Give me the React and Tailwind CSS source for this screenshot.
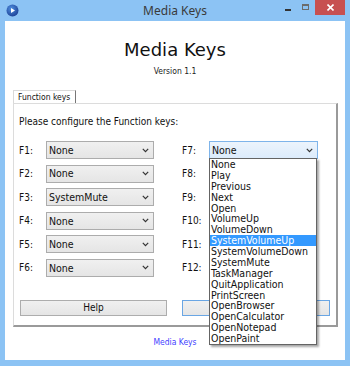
import React from "react";

const Chevron = () => (
  <svg width="7" height="5" viewBox="0 0 7 5" className="shrink-0">
    <path d="M0.8 0.8 L3.5 3.6 L6.2 0.8" fill="none" stroke="#333" strokeWidth="1.2" />
  </svg>
);

function Combo({ value, focused, children }) {
  return (
    <div className="relative w-full h-full">
      <div
        className={
          "w-full h-full flex items-center justify-between pl-[2px] pr-[4px] border text-[10.5px] leading-none text-[#111] " +
          (focused
            ? "border-[#7eb4ea] bg-gradient-to-b from-[#ecf4fc] to-[#dcecfc]"
            : "border-[#acacac] bg-gradient-to-b from-[#f0f0f0] to-[#e5e5e5]")
        }
      >
        <span>{value}</span>
        <Chevron />
      </div>
      {children}
    </div>
  );
}

const items = [
  "None",
  "Play",
  "Previous",
  "Next",
  "Open",
  "VolumeUp",
  "VolumeDown",
  "SystemVolumeUp",
  "SystemVolumeDown",
  "SystemMute",
  "TaskManager",
  "QuitApplication",
  "PrintScreen",
  "OpenBrowser",
  "OpenCalculator",
  "OpenNotepad",
  "OpenPaint",
];

function DropList() {
  return (
    <div className="absolute left-0 top-[17px] w-[108px] bg-white border border-[#646464] shadow-[2px_2px_2px_rgba(0,0,0,0.35)] z-10">
      {items.map((it) => (
        <div
          key={it}
          className={
            "h-[10.875px] leading-[10.875px] text-[10.5px] pl-[1px] whitespace-nowrap " +
            (it === "SystemVolumeUp" ? "bg-[#3399ff] text-white" : "text-[#111]")
          }
        >
          {it}
        </div>
      ))}
    </div>
  );
}

const left = [
  ["F1:", "None"],
  ["F2:", "None"],
  ["F3:", "SystemMute"],
  ["F4:", "None"],
  ["F5:", "None"],
  ["F6:", "None"],
];
const right = ["F7:", "F8:", "F9:", "F10:", "F11:", "F12:"];

export default function App() {
  return (
    <div
      className="w-[350px] h-[366px] bg-[#8cc3f4] flex flex-col overflow-hidden"
      style={{ fontFamily: '"DejaVu Sans Condensed", "DejaVu Sans", sans-serif' }}
    >
      {/* Title bar */}
      <div className="h-[21px] relative flex items-center justify-center shrink-0">
        <svg width="13" height="13" viewBox="0 0 13 13" className="absolute left-[6px] top-[4px]">
          <defs>
            <radialGradient id="g" cx="40%" cy="35%" r="70%">
              <stop offset="0%" stopColor="#4f8fe0" />
              <stop offset="100%" stopColor="#1b3f94" />
            </radialGradient>
          </defs>
          <circle cx="6.5" cy="6.5" r="6" fill="url(#g)" />
          <path d="M5 4 L9 6.5 L5 9 Z" fill="#fff" />
        </svg>
        <span
          className="text-[12px] text-[#3a3a3a] mt-[1px]"
          style={{ fontFamily: '"Noto Sans", "Open Sans", sans-serif' }}
        >
          Media Keys
        </span>
        <div className="absolute left-[285px] top-[9px] w-[6px] h-[2px] bg-[#333]" />
        <div className="absolute left-[302px] top-[4px] w-[7px] h-[6px] border border-t-2 border-[#6b6b6b]" />
        <div className="absolute left-[315px] top-0 w-[30px] h-[15px] bg-[#c75050] flex items-center justify-center">
          <svg width="7" height="7" viewBox="0 0 7 7">
            <path d="M0.5 0.5 L6.5 6.5 M6.5 0.5 L0.5 6.5" stroke="#fff" strokeWidth="1.6" />
          </svg>
        </div>
      </div>

      {/* Client */}
      <div className="flex-1 mx-[5px] mb-[6px] bg-white flex flex-col items-start">
        <div
          className="self-stretch text-center text-[18px] leading-[22px] text-[#111] mt-[18px]"
          style={{ fontFamily: '"DejaVu Sans", sans-serif' }}
        >
          Media Keys
        </div>
        <div className="self-stretch text-center text-[8.5px] leading-[12px] text-[#222] mt-[4px]">
          Version 1.1
        </div>

        {/* Tab header */}
        <div className="ml-[8px] mt-[13px] w-[63px] h-[13px] pl-[4px] border-t border-l border-[#d9d9d9] border-r border-r-[#777] flex items-center text-[8.5px] leading-none text-[#111]">
          Function keys
        </div>

        {/* Tab panel */}
        <div className="ml-[8px] w-[325px] h-[224px] border-t border-l border-[#dcdcdc] border-r-2 border-b-2 border-r-[#9a9a9a] border-b-[#9a9a9a] pl-[5px] pt-[11px] flex flex-col">
          <div className="text-[10px] leading-[14px] text-[#111]">
            Please configure the Function keys:
          </div>
          <div className="mt-[12px] grid grid-cols-[27px_108px_55px_109px] gap-y-[5.6px] auto-rows-[18px]">
            {left.map(([k, v], i) => (
              <React.Fragment key={k}>
                <div className="text-[10px] text-[#111] flex items-center">{k}</div>
                <Combo value={v} />
                <div className="text-[10px] text-[#111] flex items-center pl-[28px]">
                  {right[i]}
                </div>
                {i === 0 ? (
                  <Combo value="None" focused>
                    <DropList />
                  </Combo>
                ) : (
                  <div />
                )}
              </React.Fragment>
            ))}
          </div>
          <div className="mt-[23px] ml-[1px] flex gap-[15px]">
            <div className="w-[147px] h-[16px] border border-[#adadad] bg-gradient-to-b from-[#f0f0f0] to-[#e5e5e5] flex items-center justify-center text-[10px] text-[#111]">
              Help
            </div>
            <div className="w-[148px] h-[16px] border border-[#6aa6e4] bg-gradient-to-b from-[#f0f0f0] to-[#e5e5e5]" />
          </div>
        </div>

        <div className="self-stretch text-center text-[8.5px] leading-[11px] text-[#3f3fff] mt-[10px]">
          Media Keys
        </div>
      </div>
    </div>
  );
}
